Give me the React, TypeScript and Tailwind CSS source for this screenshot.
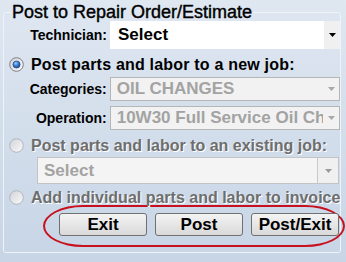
import React from "react";

function Radio({ checked }: { checked?: boolean }) {
  return (
    <svg width="15" height="15" viewBox="0 0 15 15" className="shrink-0">
      <defs>
        <linearGradient id={checked ? "rg1" : "rg0"} x1="0" y1="0" x2="1" y2="1">
          <stop offset="0" stopColor="#cfd3d8" />
          <stop offset="1" stopColor="#fbfbfb" />
        </linearGradient>
        <radialGradient id="dot" cx="0.4" cy="0.35" r="0.7">
          <stop offset="0" stopColor="#9fd0ff" />
          <stop offset="0.45" stopColor="#3b82d6" />
          <stop offset="1" stopColor="#17417e" />
        </radialGradient>
      </defs>
      <circle
        cx="7.5"
        cy="7.5"
        r="6.8"
        fill={checked ? "url(#rg1)" : "url(#rg0)"}
        stroke={checked ? "#7c7f84" : "#b3b6ba"}
        strokeWidth="1"
      />
      {checked && <circle cx="7.5" cy="7.5" r="3.6" fill="url(#dot)" stroke="#1b3e73" strokeWidth="0.6" />}
    </svg>
  );
}

function Arrow({ color }: { color: string }) {
  return (
    <svg width="7" height="4" viewBox="0 0 7 4">
      <path d="M0 0h7L3.5 4z" fill={color} />
    </svg>
  );
}

export default function App() {
  return (
    <div className="w-[346px] h-[262px] overflow-hidden bg-gradient-to-b from-[#dfe7f1] to-[#c7d5e6] font-['Liberation_Sans',Arial,sans-serif] text-black pt-[3px]">
      <fieldset className="ml-[3px] w-[338px] h-[250px] rounded-[3px] border border-[#eef3f8] p-0 min-w-0">
        <legend className="ml-[7px] px-[1px] text-[18px] leading-[18px] font-normal [-webkit-text-stroke:0.4px_#000]">
          Post to Repair Order/Estimate
        </legend>

        {/* technician */}
        <div className="flex items-center h-[28px]">
          <div className="w-[106px] pr-[3px] text-right text-[14px] font-bold">Technician:</div>
          <div className="w-[230px] h-full bg-white flex items-center justify-between">
            <span className="pl-[8px] text-[17px] font-bold">Select</span>
            <div className="w-[16px] h-full bg-[#f0f0f0] flex items-center justify-center">
              <Arrow color="#000" />
            </div>
          </div>
        </div>

        {/* new job */}
        <div className="mt-[8px] h-[15px] pl-[5px] flex items-center gap-[7px]">
          <Radio checked />
          <span className="text-[16px] font-bold leading-[16px] whitespace-nowrap tracking-[0.2px]">Post parts and labor to a new job:</span>
        </div>

        <div className="mt-[5px] flex items-center h-[24px]">
          <div className="w-[106px] pr-[3px] text-right text-[14px] font-bold">Categories:</div>
          <div className="w-[231px] h-full bg-[#f2f2f2] border border-[#b6b6b6] flex items-center justify-between overflow-hidden">
            <span className="pl-[6px] text-[17px] font-bold text-[#a3a3a3] whitespace-nowrap">OIL CHANGES</span>
            <div className="w-[16px] shrink-0 flex items-center justify-center">
              <Arrow color="#a8a8a8" />
            </div>
          </div>
        </div>

        <div className="mt-[5px] flex items-center h-[24px]">
          <div className="w-[106px] pr-[3px] text-right text-[14px] font-bold">Operation:</div>
          <div className="w-[231px] h-full bg-[#f2f2f2] border border-[#b6b6b6] flex items-center justify-between overflow-hidden">
            <span className="pl-[6px] text-[17px] font-bold text-[#a3a3a3] whitespace-nowrap overflow-hidden">10W30 Full Service Oil Change</span>
            <div className="w-[16px] shrink-0 flex items-center justify-center bg-[#f2f2f2]">
              <Arrow color="#a8a8a8" />
            </div>
          </div>
        </div>

        {/* existing job */}
        <div className="mt-[8px] h-[15px] pl-[5px] flex items-center gap-[7px]">
          <Radio />
          <span className="text-[16px] font-bold leading-[16px] whitespace-nowrap text-[#6e6e6e] [text-shadow:1px_1px_0_#fff]">
            Post parts and labor to an existing job:
          </span>
        </div>

        <div className="mt-[4px] ml-[33px] w-[302px] h-[27px] bg-[#f4f4f4] border border-[#c4c4c4] flex items-center justify-between">
          <span className="pl-[6px] text-[17px] font-bold text-[#a3a3a3]">Select</span>
          <div className="w-[21px] h-full border-l border-[#c9c9c9] bg-[#f0f0f0] flex items-center justify-center">
            <Arrow color="#9a9a9a" />
          </div>
        </div>

        {/* individual */}
        <div className="mt-[6px] h-[15px] pl-[5px] flex items-center gap-[7px] overflow-visible">
          <Radio />
          <span className="text-[16px] font-bold leading-[16px] whitespace-nowrap text-[#6e6e6e] [text-shadow:1px_1px_0_#fff]">
            Add individual parts and labor to invoice
          </span>
        </div>

        {/* buttons */}
        <div className="ml-[39px] w-[302px] h-[42px] rounded-[40px/21px] border-2 border-[#c8101e] flex items-start gap-[8px] pl-[14px] pt-[6px]">
          {["Exit", "Post", "Post/Exit"].map((b) => (
            <button
              key={b}
              className="w-[88px] h-[23px] rounded-[3px] border border-[#707070] bg-gradient-to-b from-[#f4f4f4] to-[#d9d9d9] text-[17px] font-bold leading-[20px] text-black"
            >
              {b}
            </button>
          ))}
        </div>
      </fieldset>
    </div>
  );
}
